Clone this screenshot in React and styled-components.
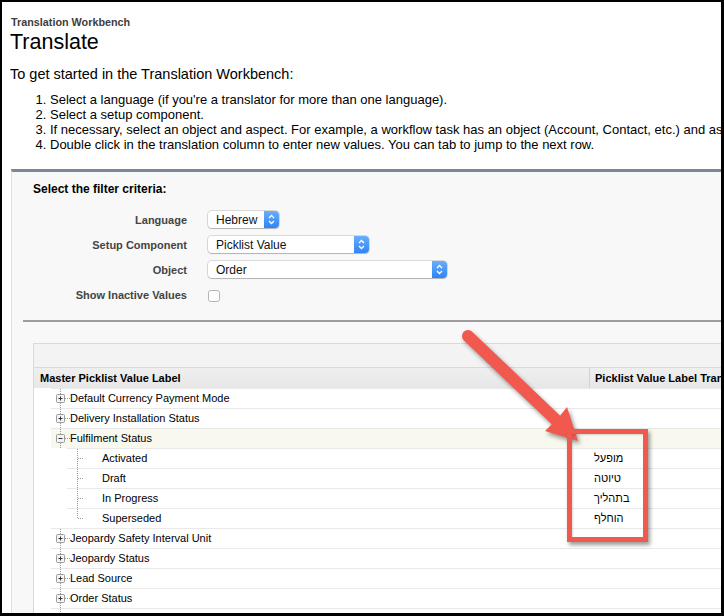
import React from "react";
import styled, { createGlobalStyle } from "styled-components";

const GlobalStyle = createGlobalStyle`
  body {
    margin: 0;
    background: #fff;
    font-family: "Liberation Sans", Arial, sans-serif;
  }
`;

const Frame = styled.div`
  position: relative;
  width: 724px;
  height: 616px;
  box-sizing: border-box;
  border: 2px solid #000;
  border-right-width: 3px;
  border-bottom-width: 3px;
  overflow: hidden;
  background: #fff;
`;

const Page = styled.div`
  width: 1000px;
  padding: 13px 0 0 8px;
  color: #000;
`;

const Crumb = styled.div`
  font-size: 10.8px;
  line-height: 14px;
  font-weight: bold;
  color: #3e3e3e;
  padding-left: 1px;
`;

const Title = styled.h1`
  margin: 1px 0 0;
  font-size: 21.5px;
  line-height: 24px;
  font-weight: normal;
`;

const Intro = styled.p`
  margin: 13px 0 0;
  font-size: 14.5px;
  line-height: 15px;
`;

const Steps = styled.ol`
  margin: 10px 0 0;
  padding-left: 40px;
  font-size: 13px;
  line-height: 15px;
`;

const Panel = styled.section`
  margin: 17px 0 0 1px;
  border-top: 3px solid #7c8696;
  border-left: 1px solid #e0e0e0;
  background: #f8f8f8;
  padding-top: 10px;
  padding-bottom: 40px;
`;

const PanelHead = styled.div`
  padding-left: 21px;
`;

const PanelTitle = styled.h3`
  margin: 0;
  font-size: 12px;
  line-height: 15px;
  font-weight: bold;
`;

const FilterGrid = styled.div`
  display: grid;
  grid-template-columns: 154px auto;
  grid-auto-rows: 25px;
  column-gap: 21px;
  align-items: center;
  justify-items: start;
  margin-top: 10px;
`;

const Label = styled.label`
  justify-self: end;
  font-size: 11px;
  font-weight: bold;
  color: #444;
  padding-top: 1px;
`;

const SelectBox = styled.div`
  width: ${(p) => p.$w}px;
  height: 17px;
  box-sizing: border-box;
  display: flex;
  align-items: center;
  padding-left: 8px;
  background: #fff;
  border-radius: 4px;
  box-shadow: 0 0 0 1px rgba(0, 0, 0, 0.12), 0 1px 1px rgba(0, 0, 0, 0.18);
  font-size: 12px;
  color: #111;
`;

const Stepper = styled.span`
  margin-left: auto;
  width: 15px;
  height: 17px;
  border-radius: 0 4px 4px 0;
  background: linear-gradient(#69aefb, #2f85f4);
  display: flex;
  align-items: center;
  justify-content: center;
`;

const Checkbox = styled.span`
  width: 12px;
  height: 12px;
  box-sizing: border-box;
  border: 1px solid #b4b4b4;
  border-radius: 3px;
  background: #fff;
  margin-top: 2px;
`;

const Divider = styled.hr`
  margin: 13px 0 0 11px;
  border: 0;
  height: 2px;
  background: #9c9c9c;
`;

const TableBox = styled.div`
  margin: 21px 0 0 21px;
  border-top: 1px solid #dadada;
  border-left: 1px solid #dadada;
  background: #fff;
`;

const Toolbar = styled.div`
  height: 23px;
  background: #f3f3f3;
  border-bottom: 1px solid #dadada;
`;

const HeadRow = styled.div`
  display: flex;
  height: 20px;
  background: linear-gradient(#efefef, #e7e7e7);
  font-size: 11px;
  font-weight: bold;
  line-height: 20px;
`;

const HeadCell = styled.div`
  flex: 0 0 ${(p) => p.$w}px;
  padding-left: ${(p) => (p.$first ? 6 : 5)}px;
  box-sizing: border-box;
  border-left: ${(p) => (p.$first ? "none" : "1px solid #d2d2d2")};
  white-space: nowrap;
`;

const Row = styled.div`
  display: flex;
  height: 20px;
  box-sizing: border-box;
  margin-left: ${(p) => p.$indent}px;
  border-top: 1px solid #e9e9e9;
  background: ${(p) => (p.$active ? "#f9f8ee" : "#fff")};
  font-size: 11px;
  line-height: 19px;
`;

const NameCell = styled.div`
  flex: 0 0 ${(p) => 555 - p.$indent}px;
  display: flex;
  align-items: center;
  white-space: nowrap;
`;

const ValueCell = styled.div`
  padding-left: 5px;
  white-space: nowrap;
  font-size: 11px;
`;

const CalloutBox = styled.div`
  position: absolute;
  left: 565px;
  top: 427px;
  width: 81px;
  height: 113px;
  box-sizing: border-box;
  border: 5px solid #f1594f;
  box-shadow: 2px 3px 4px rgba(0, 0, 0, 0.4), inset 1px 1px 2px rgba(0, 0, 0, 0.15);
  pointer-events: none;
`;

const ArrowSvg = styled.svg`
  position: absolute;
  left: -2px;
  top: -2px;
  pointer-events: none;
  filter: drop-shadow(2px 3px 2px rgba(0, 0, 0, 0.4));
`;

const Chevrons = () => (
  <svg width="7" height="11" viewBox="0 0 7 11">
    <path d="M1 4 L3.5 1.5 L6 4 M1 7 L3.5 9.5 L6 7" fill="none" stroke="#fff" strokeWidth="1.3" />
  </svg>
);

const Select = ({ w, children }) => (
  <SelectBox $w={w}>
    {children}
    <Stepper>
      <Chevrons />
    </Stepper>
  </SelectBox>
);

const dot = { stroke: "#9a9a9a", strokeDasharray: "1 1" };

const ToggleMark = ({ open }) => (
  <svg width="19" height="19" viewBox="0 0 19 19">
    <line x1="9.5" y1="0" x2="9.5" y2="19" {...dot} />
    <line x1="14" y1="9.5" x2="19" y2="9.5" {...dot} />
    <rect x="5.5" y="5.5" width="8" height="8" rx="1" fill="#f3f3f3" stroke="#9c9c9c" />
    <line x1="7.5" y1="9.5" x2="11.5" y2="9.5" stroke="#333" />
    {!open && <line x1="9.5" y1="7.5" x2="9.5" y2="11.5" stroke="#333" />}
  </svg>
);

const BranchMark = ({ last }) => (
  <svg width="35" height="19" viewBox="0 0 35 19">
    <line x1="10.5" y1="0" x2="10.5" y2={last ? 9.5 : 19} {...dot} />
    <line x1="11" y1="9.5" x2="17" y2="9.5" {...dot} />
  </svg>
);

const rows = [
  { name: "Default Currency Payment Mode" },
  { name: "Delivery Installation Status" },
  { name: "Fulfilment Status", open: true },
  { name: "Activated", child: true, value: "מופעל" },
  { name: "Draft", child: true, value: "טיוטה" },
  { name: "In Progress", child: true, value: "בתהליך" },
  { name: "Superseded", child: true, last: true, value: "הוחלף" },
  { name: "Jeopardy Safety Interval Unit" },
  { name: "Jeopardy Status" },
  { name: "Lead Source" },
  { name: "Order Status" },
  { name: "Order Type" },
];

export default function App() {
  return (
    <>
      <GlobalStyle />
      <Frame>
        <Page>
          <Crumb>Translation Workbench</Crumb>
          <Title>Translate</Title>
          <Intro>To get started in the Translation Workbench:</Intro>
          <Steps>
            <li>Select a language (if you're a translator for more than one language).</li>
            <li>Select a setup component.</li>
            <li>
              If necessary, select an object and aspect. For example, a workflow task has an object
              (Account, Contact, etc.) and aspect (Subject or Description).
            </li>
            <li>Double click in the translation column to enter new values. You can tab to jump to the next row.</li>
          </Steps>

          <Panel>
            <PanelHead>
              <PanelTitle>Select the filter criteria:</PanelTitle>
              <FilterGrid>
                <Label>Language</Label>
                <Select w={71}>Hebrew</Select>
                <Label>Setup Component</Label>
                <Select w={161}>Picklist Value</Select>
                <Label>Object</Label>
                <Select w={239}>Order</Select>
                <Label>Show Inactive Values</Label>
                <Checkbox />
              </FilterGrid>
            </PanelHead>
            <Divider />
            <TableBox>
              <Toolbar />
              <HeadRow>
                <HeadCell $first $w={555}>Master Picklist Value Label</HeadCell>
                <HeadCell $w={300}>Picklist Value Label Translation</HeadCell>
              </HeadRow>
              {rows.map((r) => {
                const indent = r.child ? 33 : 17;
                return (
                  <Row key={r.name} $indent={indent} $active={r.open}>
                    <NameCell $indent={indent}>
                      {r.child ? <BranchMark last={r.last} /> : <ToggleMark open={r.open} />}
                      <span>{r.name}</span>
                    </NameCell>
                    <ValueCell>{r.value}</ValueCell>
                  </Row>
                );
              })}
            </TableBox>
          </Panel>
        </Page>

        <ArrowSvg width="724" height="616" viewBox="0 0 724 616">
          <line x1="468" y1="336" x2="556" y2="420" stroke="#f1594f" strokeWidth="12" strokeLinecap="round" />
          <polygon points="578,441 545,431 552,424 559,417 567,407" fill="#f1594f" />
        </ArrowSvg>
        <CalloutBox />
      </Frame>
    </>
  );
}
